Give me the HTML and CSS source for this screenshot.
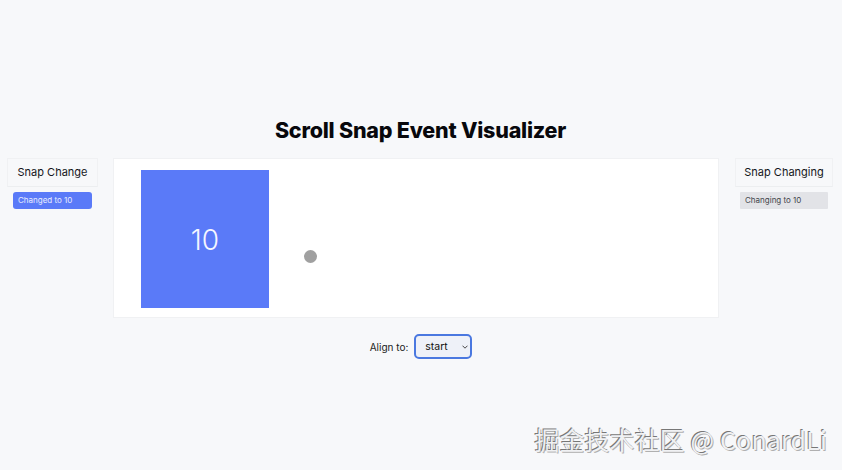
FILE: index.html
```html
<!DOCTYPE html>
<html lang="en">
<head>
<meta charset="utf-8">
<title>Scroll Snap Event Visualizer</title>
<link rel="stylesheet" href="styles.css">
</head>
<body>
<main class="page">
  <h1 class="title">Scroll Snap Event Visualizer</h1>
  <div class="stage">
    <aside class="panel panel-left">
      <h2 class="panel-head">Snap Change</h2>
      <div class="log log-changed">Changed to 10</div>
    </aside>
    <section class="scroller">
      <div class="box">10</div>
      <span class="touch-dot"></span>
    </section>
    <aside class="panel panel-right">
      <h2 class="panel-head">Snap Changing</h2>
      <div class="log log-changing">Changing to 10</div>
    </aside>
  </div>
  <div class="controls">
    <label class="align-label" for="align">Align to:</label>
    <div class="select-wrap">
      <select class="align-select" id="align">
        <option>start</option>
        <option>center</option>
        <option>end</option>
      </select>
      <svg class="chevron" viewBox="0 0 6 4" width="6" height="4" aria-hidden="true"><path d="M0.5 0.7 L3 3.2 L5.5 0.7" fill="none" stroke="#333" stroke-width="0.9"/></svg>
    </div>
  </div>
</main>
<div class="watermark">掘金技术社区 @ ConardLi</div>
</body>
</html>
```

FILE: styles.css
```css
* { box-sizing: border-box; }
html, body { margin: 0; height: 100%; }
body {
  background: #f7f8fa;
  color: #0b0b0f;
  font-family: Inter, "Noto Sans", sans-serif;
  overflow: hidden;
}
.page {
  padding: 117px 9px 0 7px;
  display: flex;
  flex-direction: column;
  align-items: center;
}
.title {
  margin: 0 0 15px 1px;
  font-size: 21.5px;
  line-height: 26px;
  font-weight: 800;
  letter-spacing: -0.22px;
  color: #08080c;
}
.stage {
  width: 100%;
  display: flex;
  align-items: flex-start;
  gap: 15px;
}
.panel { width: 91px; }
.panel-right { width: 98px; margin-left: auto; }
.panel-head {
  margin: 0;
  height: 29px;
  border: 1px solid #f0f1f3;
  border-bottom-color: #eceef0;
  font-size: 11px;
  font-weight: 400;
  line-height: 27px;
  text-align: center;
  color: #15161a;
}
.log {
  margin: 5px 6px 0;
  height: 17px;
  border-radius: 3px;
  padding-left: 5px;
  font-size: 8px;
  line-height: 17px;
}
.panel-right .log { margin: 5px 5px 0; }
.log-changed { background: #5a7af8; color: #e8ecff; }
.log-changing { background: #e2e3e7; color: #44464c; border-radius: 1px; }
.scroller {
  position: relative;
  width: 606px;
  height: 160px;
  background: #fff;
  border: 1px solid #f0f1f3;
  padding: 11px 0 0 27px;
}
.box {
  width: 128px;
  height: 138px;
  padding-top: 1px;
  background: #5a7af8;
  color: #f4f6ff;
  font-size: 28px;
  font-weight: 300;
  display: flex;
  align-items: center;
  justify-content: center;
}
.touch-dot {
  position: absolute;
  left: 190px;
  top: 91px;
  width: 13px;
  height: 13px;
  border-radius: 50%;
  background: #a0a0a0;
}
.controls {
  margin: 16px 0 0 2px;
  display: flex;
  align-items: center;
  gap: 6px;
}
.align-label { font-size: 10px; color: #1c1d22; }
.select-wrap { position: relative; display: flex; }
.align-select {
  appearance: none;
  width: 58px;
  height: 25px;
  border: 2px solid #4a78e0;
  border-radius: 5px;
  background: #eef1f8;
  color: #111;
  font-family: Inter, sans-serif;
  font-size: 10.5px;
  line-height: 21px;
  padding: 0 0 0 9px;
  outline: none;
}
.chevron {
  position: absolute;
  right: 4px;
  top: 11px;
  pointer-events: none;
}
.watermark {
  position: absolute;
  right: 15px;
  bottom: 16px;
  font-family: "Noto Sans CJK SC", "Noto Sans", sans-serif;
  font-size: 24.8px;
  line-height: 30px;
  color: #f0f1f3;
  letter-spacing: 0.25px;
  text-shadow: -1px -1px 0 #777, 1px 1px 0 #b0b0b0;
}
```
